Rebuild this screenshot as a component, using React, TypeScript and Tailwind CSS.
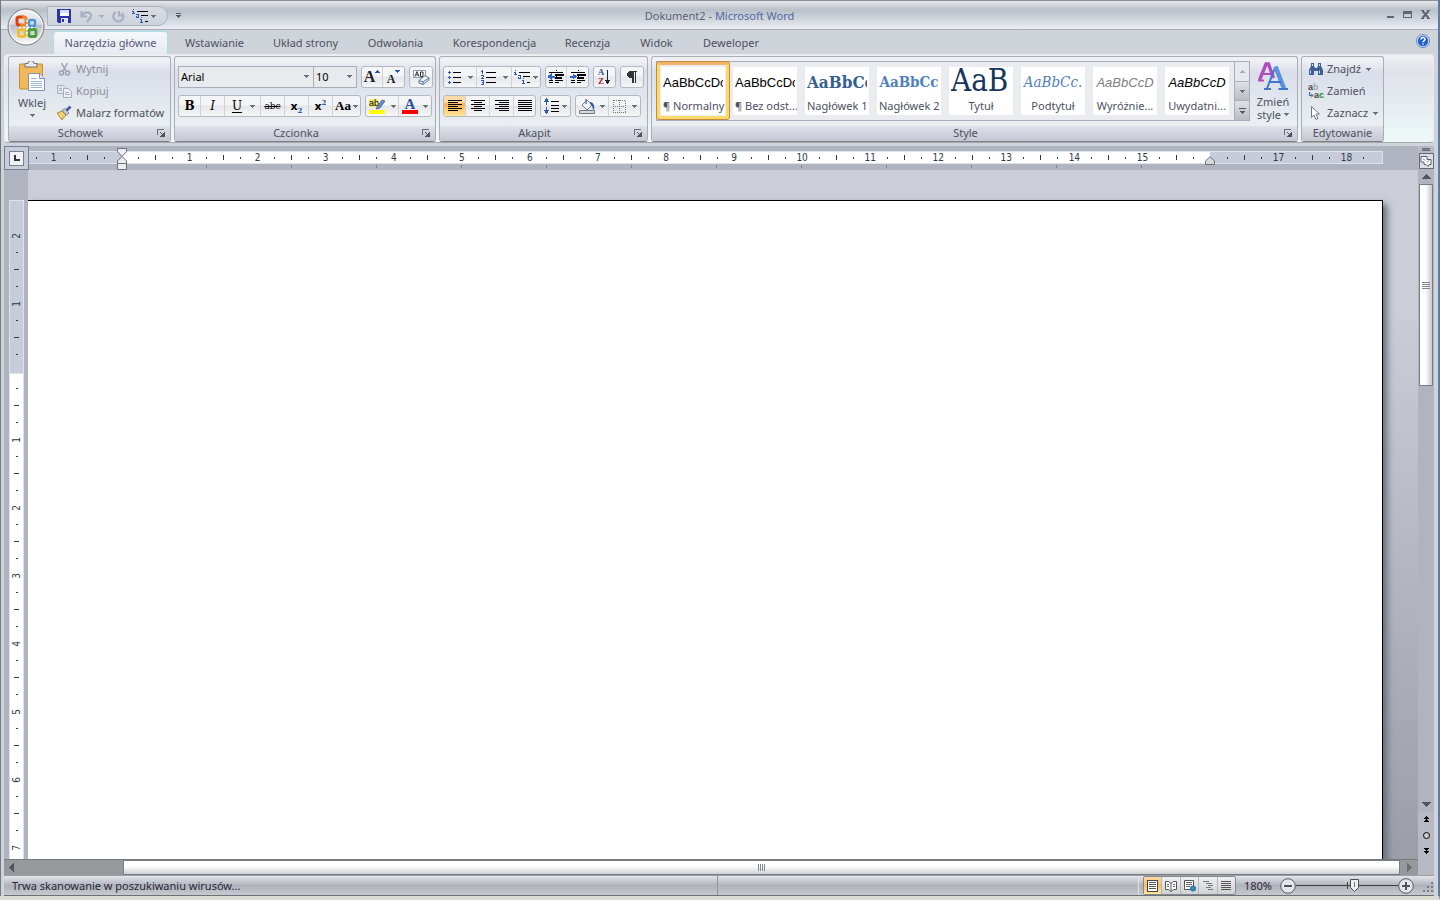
import { clsx } from 'clsx';
import type { ReactNode } from 'react';

const tabs = [
    { label: 'Wstawianie', width: 'w-[89px]' },
    { label: 'Układ strony', width: 'w-[93px]' },
    { label: 'Odwołania', width: 'w-[87px]' },
    { label: 'Korespondencja', width: 'w-[111px]' },
    { label: 'Recenzja', width: 'w-[75px]' },
    { label: 'Widok', width: 'w-[63px]' },
    { label: 'Deweloper', width: 'w-[86px]' },
];

const styles = [
    { name: '¶ Normalny', sample: 'AaBbCcDc', look: "font-['Liberation_Sans'] text-[13px] text-black", active: true },
    { name: '¶ Bez odst...', sample: 'AaBbCcDc', look: "font-['Liberation_Sans'] text-[13px] text-black" },
    { name: 'Nagłówek 1', sample: 'AaBbCc', look: "font-['DejaVu_Serif_Condensed','DejaVu_Serif'] text-[17px] font-bold text-[#365f91]" },
    { name: 'Nagłówek 2', sample: 'AaBbCc', look: "justify-center font-['DejaVu_Serif_Condensed','DejaVu_Serif'] text-[15px] font-bold text-[#4f81bd]" },
    { name: 'Tytuł', sample: 'AaB', look: "pb-[5px] font-['DejaVu_Serif_Condensed','DejaVu_Serif'] text-[31px] text-[#17365d]" },
    { name: 'Podtytuł', sample: 'AaBbCc.', look: "justify-center font-['DejaVu_Serif_Condensed','DejaVu_Serif'] text-[15px] italic text-[#4f81bd]" },
    { name: 'Wyróżnie...', sample: 'AaBbCcD', look: "justify-center font-['Liberation_Sans'] text-[13px] italic text-[#808080]" },
    { name: 'Uwydatni...', sample: 'AaBbCcD', look: "justify-center font-['Liberation_Sans'] text-[13px] italic text-black" },
];

function Caret({ className }: { className?: string }) {
    return (
        <svg className={clsx('shrink-0', className)} width="5" height="3" viewBox="0 0 5 3" shapeRendering="crispEdges">
            <path d="M0 0h5v1h-1v1h-1v1h-1v-1h-1v-1h-1z" fill="#6b7078" />
        </svg>
    );
}

function Bars({ rows, color = '#000' }: { rows: number[][]; color?: string }) {
    return (
        <>
            {rows.map(([x, y, w], i) => (
                <rect key={i} x={x} y={y} width={w} height="1" fill={color} />
            ))}
        </>
    );
}

function Icon({ w = 16, h = 16, crisp, children }: { w?: number; h?: number; crisp?: boolean; children: ReactNode }) {
    return (
        <svg className="shrink-0" width={w} height={h} viewBox={`0 0 ${w} ${h}`} fill="none" shapeRendering={crisp ? 'crispEdges' : 'auto'}>
            {children}
        </svg>
    );
}

function ButtonGroup({ children }: { children: ReactNode }) {
    return (
        <div className="flex h-[22px] shrink-0 divide-x divide-[#d0d4d9] overflow-hidden rounded-[3px] border border-[#b4b9c0] bg-linear-to-b from-[#f4f5f7] from-45% via-[#e4e6ea] via-50% to-[#f5f6f7]">
            {children}
        </div>
    );
}

function Tool({ label, width, active, children }: { label: string; width: string; active?: boolean; children: ReactNode }) {
    return (
        <button
            type="button"
            aria-label={label}
            className={clsx(
                'flex h-full shrink-0 items-center justify-center text-black',
                width,
                active && 'bg-linear-to-b from-[#fbd9a8] from-30% via-[#fdb04e] via-40% to-[#fee9a0]',
            )}
        >
            {children}
        </button>
    );
}

function RibbonGroup({ title, width, launcher, children }: { title: string; width: string; launcher?: boolean; children: ReactNode }) {
    return (
        <section
            className={clsx(
                'flex h-[86px] shrink-0 flex-col overflow-hidden rounded-[3px] border border-[#abaeb5] border-b-[#7d8084] bg-linear-to-b from-[#eef0f4] from-5% via-[#dadeea] via-18% to-[#eff4f4]',
                width,
            )}
        >
            <div className="flex flex-1">{children}</div>
            <div className="flex h-[15px] items-center bg-linear-to-b from-[#dee1ea] to-[#c5c8d2] pb-px">
                <h2 className="flex-1 text-center">{title}</h2>
                {launcher && (
                    <button type="button" aria-label={`${title} – więcej opcji`} className="flex w-[18px] justify-center">
                        <Icon w={8} h={8} crisp>
                            <path d="M0 0h7v1H1v5H0z" fill="#6a6e76" />
                            <path d="M7 3h1v5H3V7h1V6h1V5h1V4h1zM3 3h1v1H3zM4 4h1v1H4z" fill="#50545c" />
                        </Icon>
                    </button>
                )}
            </div>
        </section>
    );
}

function OfficeButton() {
    return (
        <button type="button" aria-label="Przycisk pakietu Office" className="absolute top-[8px] left-[6px] z-10">
            <svg width="38" height="38" viewBox="0 0 38 38" fill="none">
                <defs>
                    <linearGradient id="orb" x1="0" y1="0" x2="0" y2="1">
                        <stop offset="0" stopColor="#f6f6f8" />
                        <stop offset="0.42" stopColor="#d9dade" />
                        <stop offset="0.46" stopColor="#babcc3" />
                        <stop offset="1" stopColor="#ffffff" />
                    </linearGradient>
                </defs>
                <circle cx="19" cy="19" r="18" fill="url(#orb)" stroke="#777b82" />
                <circle cx="19" cy="19" r="16.500" stroke="#fff" strokeOpacity="0.7" />
                <path d="M14 17h-2a2 2 0 0 1-2-2v-4a2 2 0 0 1 2-2h5" stroke="#dd3f0c" strokeWidth="3" />
                <path d="M15 9h2a2 2 0 0 1 2 2v4a2 2 0 0 1-2 2h-4" stroke="#f58220" strokeWidth="3" />
                <rect x="22" y="12" width="6" height="6" rx="1.500" stroke="#4a95d8" strokeWidth="2.400" />
                <rect x="11.500" y="21.500" width="6.500" height="7" rx="1.500" stroke="#f8b91c" strokeWidth="2.600" />
                <rect x="22" y="21.500" width="7" height="7" rx="1.500" stroke="#4c9e3a" strokeWidth="2.800" />
                <path d="M20 12v16M12 19.500h16" stroke="#fff" strokeWidth="1.500" strokeDasharray="2 2" />
            </svg>
        </button>
    );
}

function TitleBar() {
    return (
        <header className="grid h-[30px] shrink-0 grid-cols-[1fr_auto_1fr] items-center border-t border-b border-t-[#8b8f97] border-b-[#a5abb5] bg-linear-to-b from-[#e6e7ea] from-0% via-[#b9c0c9] via-32% to-[#eaedf3] pt-[2px]">
            <div className="flex items-center pl-[46px]">
                <div className="flex h-[20px] w-[121px] items-center rounded-r-full border border-[#aeb5bf] bg-linear-to-b from-[#d9dce2] to-[#cdd3dc] pl-[9px]">
                    <button type="button" aria-label="Zapisz">
                        <Icon w={15} h={15} crisp>
                            <path d="M0 0h14v14H1L0 13z" fill="#2b35a8" />
                            <path d="M3 1h9v6H3z" fill="#cfe0fa" />
                            <path d="M3 4h9v3H3z" fill="#fff" />
                            <path d="M4 9h7v5H4z" fill="#dfe3f6" />
                            <path d="M5 10h2v3H5z" fill="#2b35a8" />
                        </Icon>
                    </button>
                    <button type="button" aria-label="Cofnij" className="ml-[8px] flex items-center">
                        <Icon w={13} h={13}>
                            <path d="M1.500 1v5.500H7M2 6C4 1.500 11 1 11 5.500c0 3-2.500 4-4 6.500" stroke="#a9aec2" strokeWidth="2.200" />
                        </Icon>
                        <Caret className="ml-[6px] opacity-40" />
                    </button>
                    <button type="button" aria-label="Powtórz" className="ml-[8px]">
                        <Icon w={13} h={13}>
                            <path d="M7 1v4.500h4.500M4 2a5 5 0 1 0 6 1" stroke="#a9aec2" strokeWidth="2.200" />
                        </Icon>
                    </button>
                    <button type="button" aria-label="Lista wielopoziomowa" className="ml-[7px] flex items-center">
                        <MultiListIcon />
                        <Caret className="ml-[2px]" />
                    </button>
                </div>
                <button type="button" aria-label="Dostosuj pasek Szybki dostęp" className="ml-[8px]">
                    <Icon w={5} h={6} crisp>
                        <path d="M0 0h5v1H0zM0 2h5v1H4v1H3v1H2V4H1V3H0z" fill="#555a63" />
                    </Icon>
                </button>
            </div>
            <h1 className="whitespace-pre text-[#5c5f72]">
                Dokument2 - <span className="text-[#54699f]">Microsoft Word</span>
            </h1>
            <div className="flex justify-end gap-[9px] pr-[8px] pb-[4px]">
                <button type="button" aria-label="Minimalizuj">
                    <Icon w={8} h={9} crisp>
                        <path d="M1 6h7v2H1z" fill="#5f6670" />
                    </Icon>
                </button>
                <button type="button" aria-label="Przywróć">
                    <Icon w={9} h={9} crisp>
                        <path d="M0 1h9v7H0zM1 4v3h7V4z" fill="#5f6670" fillRule="evenodd" />
                    </Icon>
                </button>
                <button type="button" aria-label="Zamknij">
                    <Icon w={9} h={9}>
                        <path d="M1.500 1l6 7M7.500 1l-6 7" stroke="#5f6670" strokeWidth="2" />
                        <path d="M0 .5h3M6 .5h3M0 8.500h3M6 8.500h3" stroke="#5f6670" />
                    </Icon>
                </button>
            </div>
        </header>
    );
}

function MultiListIcon() {
    return (
        <Icon w={17} h={16} crisp>
            <path d="M1 1h1v1H1zM0 3h2v2h1v1H0V5h1V4H0z" fill="#2c56b0" />
            <path d="M4 6h3v4H4V8h2V7H4zM5 8v1h1V8z" fill="#2c56b0" fillRule="evenodd" />
            <path d="M9 9h1v1H9zM8 11h2v3h1v1H8v-1h1v-2H8z" fill="#2c56b0" />
            <Bars rows={[[5, 3, 11], [9, 7, 7], [13, 13, 3]]} />
        </Icon>
    );
}

function TabBar() {
    return (
        <nav className="flex h-6 shrink-0 items-end pl-[49px]">
            <button
                type="button"
                className="h-[23px] w-[115px] rounded-t-[4px] border border-b-0 border-[#a9dfe8] bg-linear-to-b from-[#f4f7fa] to-[#e6eaf1] pb-px text-[#565a78]"
            >
                Narzędzia główne
            </button>
            <div className="flex flex-1 pl-[2px]">
                {tabs.map((tab) => (
                    <button key={tab.label} type="button" className={clsx('h-[23px] shrink-0 pt-px', tab.width)}>
                        {tab.label}
                    </button>
                ))}
            </div>
            <button type="button" aria-label="Pomoc" className="mr-1 mb-[6px]">
                <svg width="14" height="14" viewBox="0 0 14 14">
                    <circle cx="7" cy="7" r="6.500" fill="#e4edfa" stroke="#5b86c8" />
                    <circle cx="7" cy="7" r="5.200" fill="#2160c8" />
                    <path d="M5 5.500C5 3 9 3 9 5.300 9 6.800 7 6.800 7 8.300M7 9.500v1.300" stroke="#fff" strokeWidth="1.500" fill="none" />
                </svg>
            </button>
        </nav>
    );
}

function ClipboardGroup() {
    return (
        <RibbonGroup title="Schowek" width="w-[163px]" launcher>
            <button type="button" className="flex w-[46px] flex-col items-center pt-1">
                <Icon w={28} h={31}>
                    <rect x="1.500" y="3" width="23" height="25" rx="1" fill="#f1b95a" stroke="#c98e35" />
                    <path d="M7 2.500h3a3 3 0 0 1 6 0h3V6H7z" fill="#e8ebf0" stroke="#6c737c" />
                    <path d="M10.500 12.500h11l5 5v12h-16z" fill="#fff" stroke="#7f93b5" />
                    <path d="M21.500 12.500v5h5" fill="#dce6f5" stroke="#7f93b5" />
                    <path d="M13 17.500h6M13 20.500h11M13 22.500h11M13 24.500h11M13 26.500h11" stroke="#9fb2d0" />
                </Icon>
                <span className="mt-[4px] leading-[14px]">Wklej</span>
                <Caret className="mt-[4px]" />
            </button>
            <div className="flex flex-col pt-px pl-[2px]">
                <button type="button" disabled className="flex h-[22px] items-center gap-[4px] text-[#8c8f99]">
                    <Icon w={15} h={14}>
                        <path d="M4.500 1l4.500 8M10.500 1L6 9" stroke="#9ca1b4" strokeWidth="1.500" />
                        <circle cx="4.500" cy="11" r="2" stroke="#9ca1b4" strokeWidth="1.500" />
                        <circle cx="10.500" cy="11" r="2" stroke="#9ca1b4" strokeWidth="1.500" />
                    </Icon>
                    Wytnij
                </button>
                <button type="button" disabled className="flex h-[22px] items-center gap-[4px] text-[#8c8f99]">
                    <Icon w={15} h={14}>
                        <path d="M.5 1.500h6l2 2v6h-8z" fill="#e4e6ee" stroke="#a8adbf" />
                        <path d="M6.500 4.500h5l3 3v6h-8z" fill="#eef0f5" stroke="#a8adbf" />
                        <path d="M8 8.500h4M8 10.500h5M2 4.500h3M2 6.500h3" stroke="#a8adbf" />
                    </Icon>
                    Kopiuj
                </button>
                <button type="button" className="flex h-[22px] items-center gap-[4px]">
                    <Icon w={15} h={14}>
                        <path d="M0 7l5-2 4 4-4 5z" fill="#ecc45a" stroke="#97702a" strokeWidth="0.700" />
                        <path d="M2 8l3 3M4 6.500l3 3" stroke="#fff3b8" />
                        <path d="M5 4.500l2.500-2 4.500 4.500-2.500 2z" fill="#c9cdd8" stroke="#5b5f6c" strokeWidth="0.700" />
                        <path d="M9.500 4.500l4-4" stroke="#4a5ba8" strokeWidth="2.800" />
                    </Icon>
                    Malarz formatów
                </button>
            </div>
        </RibbonGroup>
    );
}

function FontGroup() {
    return (
        <RibbonGroup title="Czcionka" width="w-[262px]" launcher>
            <div className="flex flex-col gap-[7px] pt-[9px] pl-[3px]">
                <div className="flex gap-[4px]">
                    <div className="flex">
                        <label className="relative flex">
                            <select aria-label="Czcionka" className="h-[22px] w-[136px] appearance-none border border-[#a8afba] bg-[#e8eaed] pl-[2px] text-black">
                                <option>Arial</option>
                            </select>
                            <Caret className="pointer-events-none absolute top-[9px] right-[5px]" />
                        </label>
                        <label className="relative -ml-px flex">
                            <select aria-label="Rozmiar czcionki" className="h-[22px] w-[44px] appearance-none border border-[#a8afba] bg-[#e8eaed] pl-[2px] text-black">
                                <option>10</option>
                            </select>
                            <Caret className="pointer-events-none absolute top-[9px] right-[5px]" />
                        </label>
                    </div>
                    <ButtonGroup>
                        <Tool label="Zwiększ czcionkę" width="w-[21px]">
                            <span className="font-['Liberation_Serif'] text-[16px] font-bold text-[#222]">A</span>
                            <Icon w={5} h={14} crisp>
                                <path d="M2 0h1v1h1v1h1v1H0V2h1V1h1z" fill="#2c56b0" />
                            </Icon>
                        </Tool>
                        <Tool label="Zmniejsz czcionkę" width="w-[21px]">
                            <span className="pt-[3px] font-['Liberation_Serif'] text-[12px] font-bold text-[#222]">A</span>
                            <Icon w={5} h={14} crisp>
                                <path d="M0 0h5v1H4v1H3v1H2V2H1V1H0z" fill="#2c56b0" />
                            </Icon>
                        </Tool>
                    </ButtonGroup>
                    <ButtonGroup>
                        <Tool label="Wyczyść formatowanie" width="w-[22px]">
                            <Icon w={17} h={16}>
                                <path d="M.5 1.500h12v7H.5z" fill="#fff" stroke="#8b98b0" />
                                <path d="M2 7.500l2-5 2 5M3 6h2.500M7.500 3v4.500h2.500V3z" stroke="#333" />
                                <path d="M6 11.500l6-5 4 2.500v2l-6 4.500-4-1.500z" fill="#eef2fa" stroke="#5e739c" />
                                <path d="M6 11.500l4 1.500 6-4M10 13v2.500" stroke="#5e739c" />
                            </Icon>
                        </Tool>
                    </ButtonGroup>
                </div>
                <div className="flex gap-[4px] font-['DejaVu_Serif']">
                    <ButtonGroup>
                        <Tool label="Pogrubienie" width="w-[22px]">
                            <b className="text-[12px]">B</b>
                        </Tool>
                        <Tool label="Kursywa" width="w-[24px]">
                            <i className="text-[12px]">I</i>
                        </Tool>
                        <Tool label="Podkreślenie" width="w-[36px]">
                            <span className="pr-[8px] pl-[2px] text-[12px] underline underline-offset-2">U</span>
                            <Caret />
                        </Tool>
                        <Tool label="Przekreślenie" width="w-[24px]">
                            <s className="font-['DejaVu_Serif_Condensed','DejaVu_Serif'] text-[10px]">abc</s>
                        </Tool>
                        <Tool label="Indeks dolny" width="w-[24px]">
                            <b className="font-['DejaVu_Sans'] text-[11px] leading-none">x</b>
                            <b className="pt-[8px] text-[7px] leading-none text-[#2c56b0]">2</b>
                        </Tool>
                        <Tool label="Indeks górny" width="w-[24px]">
                            <b className="font-['DejaVu_Sans'] text-[11px] leading-none">x</b>
                            <b className="pb-[8px] text-[7px] leading-none text-[#2c56b0]">2</b>
                        </Tool>
                        <Tool label="Zmień wielkość liter" width="w-[27px]">
                            <b className="pr-[2px] font-['Liberation_Serif'] text-[13px]">Aa</b>
                            <Caret />
                        </Tool>
                    </ButtonGroup>
                    <ButtonGroup>
                        <Tool label="Kolor wyróżnienia tekstu" width="w-[33px]">
                            <Icon w={17} h={16}>
                                <path d="M0 1h9v8H0z" fill="#f7ef6a" />
                                <text x="0" y="8" fontSize="9" fontFamily="Liberation Sans" fill="#000">ab</text>
                                <path d="M8 9l5-7 3 1-5 7-4 1z" fill="#6f8bc5" stroke="#3f558c" strokeWidth="0.700" />
                                <path d="M0 12h16v4H0z" fill="#ff0" />
                            </Icon>
                            <Caret className="ml-[5px]" />
                        </Tool>
                        <Tool label="Kolor czcionki" width="w-[32px]">
                            <span className="flex w-4 flex-col items-center border-b-4 border-[#f00] font-['Liberation_Serif'] text-[15px] leading-[12px] font-bold text-[#2f5397]">A</span>
                            <Caret className="ml-[5px]" />
                        </Tool>
                    </ButtonGroup>
                </div>
            </div>
        </RibbonGroup>
    );
}

function ParagraphGroup() {
    return (
        <RibbonGroup title="Akapit" width="w-[209px]" launcher>
            <div className="flex flex-col gap-[7px] pt-[9px] pl-[3px]">
                <div className="flex gap-[4px]">
                    <ButtonGroup>
                        <Tool label="Punktory" width="w-[33px]">
                            <Icon w={14} h={14}>
                                <path d="M0 2.500h3M0 7.500h3M0 12.500h3M1.500 1v3M1.500 6v3M1.500 11v3" stroke="#2c56b0" />
                                <path d="M5 2.500h8M5 7.500h8M5 12.500h8" stroke="#000" />
                            </Icon>
                            <Caret className="ml-[6px]" />
                        </Tool>
                        <Tool label="Numerowanie" width="w-[35px]">
                            <Icon w={15} h={15} crisp>
                                <path d="M1 0h1v4H1zM0 1h1v1H0zM0 5h3v2H2v1h1v1H0V8h1V7h1V6H0zM0 10h3v5H0v-1h2v-1H1v-1h1v-1H0z" fill="#2c56b0" />
                                <Bars rows={[[5, 2, 10], [5, 7, 10], [5, 12, 10]]} />
                            </Icon>
                            <Caret className="ml-[7px]" />
                        </Tool>
                        <Tool label="Lista wielopoziomowa" width="w-[28px]">
                            <MultiListIcon />
                            <Caret className="ml-[2px]" />
                        </Tool>
                    </ButtonGroup>
                    <ButtonGroup>
                        <Tool label="Zmniejsz wcięcie" width="w-[21px]">
                            <IndentIcon />
                        </Tool>
                        <Tool label="Zwiększ wcięcie" width="w-[21px]">
                            <IndentIcon right />
                        </Tool>
                    </ButtonGroup>
                    <ButtonGroup>
                        <Tool label="Sortuj" width="w-[21px]">
                            <span className="flex flex-col font-['Liberation_Serif'] text-[9px] leading-[9px] font-bold">
                                <span className="text-[#2c56b0]">A</span>
                                <span className="text-[#a52a3a]">Z</span>
                            </span>
                            <Icon w={7} h={15} crisp>
                                <path d="M3 0h1v10h2v1H5v2H4v1H3v-1H2v-2H1v-1h2z" fill="#222" />
                            </Icon>
                        </Tool>
                    </ButtonGroup>
                    <ButtonGroup>
                        <Tool label="Pokaż wszystko" width="w-[22px]">
                            <Icon w={10} h={13} crisp>
                                <path d="M3 0h7v1H9v11H8V1H7v11H5V7H3L1 6 0 4V2l1-1z" fill="#333" />
                            </Icon>
                        </Tool>
                    </ButtonGroup>
                </div>
                <div className="flex gap-[4px]">
                    <ButtonGroup>
                        <Tool label="Wyrównaj do lewej" width="w-[22px]" active>
                            <AlignIcon rows={[[0, 0, 14], [0, 2, 10], [0, 4, 14], [0, 6, 10], [0, 8, 14], [0, 10, 10]]} />
                        </Tool>
                        <Tool label="Wyśrodkuj" width="w-[24px]">
                            <AlignIcon rows={[[0, 0, 14], [3, 2, 8], [0, 4, 14], [3, 6, 8], [0, 8, 14], [3, 10, 8]]} />
                        </Tool>
                        <Tool label="Wyrównaj do prawej" width="w-[24px]">
                            <AlignIcon rows={[[0, 0, 14], [4, 2, 10], [0, 4, 14], [4, 6, 10], [0, 8, 14], [4, 10, 10]]} />
                        </Tool>
                        <Tool label="Wyjustuj" width="w-[21px]">
                            <AlignIcon rows={[[0, 0, 14], [0, 2, 14], [0, 4, 14], [0, 6, 14], [0, 8, 14], [0, 10, 14]]} />
                        </Tool>
                    </ButtonGroup>
                    <ButtonGroup>
                        <Tool label="Interlinia" width="w-[29px]">
                            <Icon w={15} h={16} crisp>
                                <path d="M2 0h1l2 4H3v3H2V4H0zM2 16h1l2-4H3V9H2v3H0z" fill="#2c56b0" />
                                <Bars rows={[[7, 3, 8], [7, 7, 8], [7, 10, 8], [7, 13, 8]]} />
                            </Icon>
                            <Caret className="ml-[3px]" />
                        </Tool>
                    </ButtonGroup>
                    <ButtonGroup>
                        <Tool label="Cieniowanie" width="w-[33px]">
                            <Icon w={16} h={16}>
                                <path d="M3 7l5-5 5 5-5 5z" fill="#f2f4f8" stroke="#66789c" />
                                <path d="M7 1v5" stroke="#66789c" strokeWidth="1.500" />
                                <path d="M11 4c3 0 5 3 4 8-2-1-1-4-3-5z" fill="#2c56b0" />
                                <path d="M.5 12.500h15v3H.5z" fill="#d6d9de" stroke="#777" />
                            </Icon>
                            <Caret className="ml-[5px]" />
                        </Tool>
                        <Tool label="Obramowanie" width="w-[31px]">
                            <Icon w={13} h={13} crisp>
                                <path d="M.5.5h12v12M.5 0v12M6.500 0v12M0 6.500h12" stroke="#777" strokeDasharray="1 1" />
                                <path d="M0 12.500h13" stroke="#777" strokeDasharray="1 1" />
                            </Icon>
                            <Caret className="ml-[6px]" />
                        </Tool>
                    </ButtonGroup>
                </div>
            </div>
        </RibbonGroup>
    );
}

function AlignIcon({ rows }: { rows: number[][] }) {
    return (
        <Icon w={14} h={12} crisp>
            <Bars rows={rows} />
        </Icon>
    );
}

function IndentIcon({ right }: { right?: boolean }) {
    return (
        <Icon w={16} h={14} crisp>
            <Bars rows={[[1, 2, 14], [7, 4, 9], [7, 5, 9], [7, 7, 7], [7, 8, 7], [1, 10, 4], [7, 10, 8], [1, 12, 4], [7, 12, 4]]} />
            <path d="M8.500 0v14" stroke="#000" strokeDasharray="1 1" />
            <path d={right ? 'M6 6.500L3 4v2H0v1h3v2z' : 'M0 6.500L3 4v2h3v1H3v2z'} fill="#2c66c8" stroke="#2c66c8" />
        </Icon>
    );
}

function StylesGroup() {
    return (
        <RibbonGroup title="Style" width="w-[647px]" launcher>
            <div className="mt-[4px] ml-1 flex h-[60px] w-[594px] border border-[#a8afba] bg-[#ebecef]">
                {styles.map((style) => (
                    <button
                        key={style.name}
                        type="button"
                        className={clsx(
                            'flex h-[57px] w-[72px] shrink-0 items-center justify-center',
                            style.active && 'rounded-[2px] border-[3px] border-[#fbd96a] border-t-[#f3b26b] outline outline-[#c98a3c]',
                        )}
                    >
                        <span className="flex h-12 w-16 flex-col overflow-hidden bg-white px-[2px]">
                            <span className={clsx('flex h-8 items-center overflow-hidden leading-none whitespace-nowrap', style.look)}>{style.sample}</span>
                            <span className="text-center leading-[14px] whitespace-nowrap">{style.name}</span>
                        </span>
                    </button>
                ))}
                <div className="ml-auto flex w-[15px] flex-col divide-y divide-[#a8afba] border-l border-[#a8afba]">
                    <button type="button" aria-label="W górę" className="flex flex-1 items-center justify-center bg-[#e6e9ed]">
                        <Caret className="rotate-180 opacity-50" />
                    </button>
                    <button type="button" aria-label="W dół" className="flex flex-1 items-center justify-center bg-linear-to-b from-[#dfe1e5] to-[#b9bcc2]">
                        <Caret />
                    </button>
                    <button type="button" aria-label="Więcej" className="flex flex-1 items-center justify-center bg-linear-to-b from-[#dfe1e5] to-[#b9bcc2]">
                        <Icon w={7} h={6} crisp>
                            <path d="M0 0h7v1H0zM1 3h5v1H5v1H4v1H3V5H2V4H1z" fill="#555a63" />
                        </Icon>
                    </button>
                </div>
            </div>
            <button type="button" className="flex w-[46px] flex-col items-center pt-[5px]">
                <Icon w={30} h={30}>
                    <path d="M1.500 18L8 2h2.500l5 14" stroke="#b04cc0" strokeWidth="3.400" />
                    <path d="M5 12h8M0 18.500h6" stroke="#b04cc0" strokeWidth="2" />
                    <path d="M9 26.500L16.500 7" stroke="#3f76c8" strokeWidth="2" />
                    <path d="M17.500 4.500L26 26.500" stroke="#5a92e0" strokeWidth="4.500" />
                    <path d="M12 20h11M6 27h7M20.500 27H30" stroke="#3f76c8" strokeWidth="2" />
                </Icon>
                <span className="mt-[3px] leading-[13px]">Zmień</span>
                <span className="flex items-center gap-[3px] leading-[13px]">
                    style <Caret />
                </span>
            </button>
        </RibbonGroup>
    );
}

function EditingGroup() {
    return (
        <RibbonGroup title="Edytowanie" width="w-[83px]">
            <div className="flex flex-col pt-px pl-[6px]">
                <button type="button" className="flex h-[22px] items-center gap-[3px]">
                    <Icon w={16} h={14}>
                        <path d="M3 1h3v3l1 2h2l1-2V1h3v3l2 4v5h-5V9H6v4H1V8l2-4z" fill="#3d5f98" />
                        <path d="M2.500 8.500v3M11.500 8.500v3M4.500 2v2M11.500 2v2" stroke="#d3e0f5" />
                    </Icon>
                    Znajdź <Caret className="ml-[2px]" />
                </button>
                <button type="button" className="flex h-[22px] items-center gap-[3px]">
                    <Icon w={16} h={16}>
                        <text x="0" y="7" fontSize="9" fontWeight="bold" fontFamily="Liberation Sans" fill="#444">a</text>
                        <text x="5" y="7" fontSize="9" fontWeight="bold" fontFamily="Liberation Sans" fill="#a4a6aa">b</text>
                        <text x="6" y="15" fontSize="9" fontWeight="bold" fontFamily="Liberation Sans" fill="#444">a</text>
                        <text x="11" y="15" fontSize="9" fontWeight="bold" fontFamily="Liberation Sans" fill="#1f8a2c">c</text>
                        <path d="M1.500 9v3.500h3M3 10.500l2 2-2 2" stroke="#3d5f98" />
                    </Icon>
                    Zamień
                </button>
                <button type="button" className="flex h-[22px] items-center gap-[3px]">
                    <Icon w={16} h={16}>
                        <path d="M3.500 1.500v11l2.500-2.500 2 4.500 2-1-2-4.500h3.500z" fill="#fff" stroke="#6c7a90" />
                    </Icon>
                    Zaznacz <Caret className="ml-[2px]" />
                </button>
            </div>
        </RibbonGroup>
    );
}

function Tick({ offset, vertical }: { offset: number; vertical?: boolean }) {
    const quarter = Math.abs(offset) % 4;
    if (quarter === 0) {
        return <span className={clsx("font-['DejaVu_Sans_Condensed','DejaVu_Sans'] text-[10px]", vertical && '-rotate-90')}>{Math.abs(offset) / 4}</span>;
    }
    if (vertical) {
        return <span className={clsx('h-px bg-[#30384a]', quarter === 2 ? 'w-[5px]' : 'w-[2px]')} />;
    }
    return <span className={clsx('w-px bg-[#30384a]', quarter === 2 ? 'h-[5px]' : 'h-[2px]')} />;
}

function Ticks({ from, count, stretch, vertical }: { from: number; count: number; stretch?: boolean; vertical?: boolean }) {
    return Array.from({ length: count }, (_, i) => (
        <span
            key={i}
            className={clsx('flex items-center justify-center leading-none', stretch ? 'w-0 flex-1' : 'shrink-0', !stretch && (vertical ? 'h-[17px]' : 'w-[17px]'))}
        >
            <Tick offset={from + i} vertical={vertical} />
        </span>
    ));
}

function HorizontalRuler() {
    return (
        <div className="flex h-6 shrink-0 bg-[#b0b4c0]">
            <button type="button" aria-label="Tabulator" className="flex w-[25px] items-center justify-center border border-[#777d97] bg-[#c9cdd8]">
                <span className="flex size-[15px] items-center justify-center border border-[#777d97] bg-[#f1f2f5]">
                    <span className="size-[6px] border-b-2 border-l-2 border-[#333]" />
                </span>
            </button>
            <div className="flex min-w-0 flex-1 flex-col pt-[5px] pr-[35px]">
                <div className="flex h-[13px] border-y border-[#dfe2ea] bg-[#c6ccd9] text-[#30384a]">
                    <div className="flex w-[93px] justify-end pr-[9px]">
                        <Ticks from={-5} count={5} />
                    </div>
                    <div className="relative flex min-w-0 flex-1 bg-white px-2">
                        <Ticks from={1} count={63} stretch />
                        <svg className="absolute -top-[4px] -left-[5px]" width="10" height="23" viewBox="0 0 10 23">
                            <path d="M.5.500h9v3L5 8.500.500 3.500zM5 8.500l4.500 4.500v2.500H.5V13zM.5 15.500h9v6h-9z" fill="#eceef1" stroke="#6d7076" />
                        </svg>
                        <svg className="absolute top-[4px] -right-[5px]" width="10" height="9" viewBox="0 0 10 9">
                            <path d="M.5 8.500V5L5 .8 9.500 5v3.500z" fill="#d8dadd" stroke="#6d7076" />
                        </svg>
                    </div>
                    <div className="flex w-[173px] border-r border-[#dfe2ea] pl-[9px]">
                        <Ticks from={65} count={9} />
                    </div>
                </div>
                <div className="flex pt-px pl-[93px]">
                    {Array.from({ length: 12 }, (_, i) => (
                        <span key={i} className="flex h-[3px] w-[85px] shrink-0 justify-end">
                            <span className="w-px bg-[#7f8492]" />
                        </span>
                    ))}
                </div>
            </div>
        </div>
    );
}

function VerticalRuler() {
    return (
        <div className="flex w-6 shrink-0 flex-col overflow-hidden bg-[#b0b4c0] pt-[30px] pl-[5px]">
            <div className="flex min-h-0 w-[15px] flex-1 flex-col overflow-hidden border-x border-[#dfe2ea] text-[#30384a]">
                <div className="flex h-[174px] shrink-0 flex-col items-center border-y border-[#dfe2ea] bg-[#c6ccd9] pt-[26px]">
                    <Ticks from={-8} count={8} vertical />
                </div>
                <div className="flex flex-1 flex-col items-center bg-white pt-[6px]">
                    <Ticks from={1} count={28} vertical />
                </div>
            </div>
        </div>
    );
}

function Workspace() {
    return (
        <div className="flex min-h-0 flex-1">
            <VerticalRuler />
            <main className="flex min-w-0 flex-1 overflow-hidden bg-linear-to-b from-[#cbced7] from-20% to-[#9b9ea6] pt-[30px] pr-[35px]">
                <div role="textbox" aria-label="Dokument" className="flex-1 border-t border-r border-black bg-white shadow-[4px_4px_7px_#666a78]" />
            </main>
        </div>
    );
}

function VerticalScroll() {
    return (
        <div className="flex w-[16px] shrink-0 flex-col items-center bg-[#b7bac5]">
            <span className="mt-[2px] h-[3px] w-[8px] border-y border-[#666a73] bg-[#85888e]" />
            <button type="button" aria-label="Linijka" className="mt-[2px] flex h-[16px] w-[15px] items-center justify-center border border-[#666a73] bg-[#dcdfe6]">
                <Icon w={12} h={12}>
                    <path d="M1 1.500h6v3h4v5H9l-1 2-2-2-2 0V7H1z" fill="#fff" stroke="#5b6070" />
                    <path d="M3 3.500l2 2M7 7.500l2-2" stroke="#5b6070" />
                </Icon>
            </button>
            <button type="button" aria-label="Przewiń w górę" className="flex h-[15px] w-full items-center justify-center bg-[#b0b4c0]">
                <Icon w={9} h={5} crisp>
                    <path d="M4 0h1l4 5H0z" fill="#50545e" />
                </Icon>
            </button>
            <div className="flex w-full flex-1 flex-col bg-[#b0b4c0]">
                <div className="flex h-[202px] w-[14px] flex-col items-center justify-center gap-px self-center rounded-[1px] border border-[#777b84] bg-linear-to-r from-white from-45% to-[#c9cacd]">
                    <span className="h-px w-2 bg-[#85888e]" />
                    <span className="h-px w-2 bg-[#85888e]" />
                    <span className="h-px w-2 bg-[#85888e]" />
                    <span className="h-px w-2 bg-[#85888e]" />
                </div>
            </div>
            <button type="button" aria-label="Przewiń w dół" className="flex h-[16px] w-full items-center justify-center bg-[#b0b4c0]">
                <Icon w={9} h={5} crisp>
                    <path d="M0 0h9L5 5H4z" fill="#50545e" />
                </Icon>
            </button>
            <div className="flex h-[63px] flex-col items-center gap-[9px] pt-[4px]">
                <button type="button" aria-label="Poprzednia strona">
                    <Icon w={5} h={7} crisp>
                        <path d="M2 0h1v1h1v1h1v1H3v1h1v1h1v1H0V5h1V4h1V3H0V2h1V1h1z" fill="#000" />
                    </Icon>
                </button>
                <button type="button" aria-label="Wybierz obiekt" className="size-[7px] rounded-full border border-black bg-[#c9cbd0]" />
                <button type="button" aria-label="Następna strona">
                    <Icon w={5} h={7} crisp>
                        <path d="M0 0h5v1H4v1H3v1h2v1H4v1H3v1H2V5H1V4H0V3h2V2H1V1H0z" fill="#000" />
                    </Icon>
                </button>
            </div>
        </div>
    );
}

function HorizontalScroll() {
    return (
        <div className="flex h-[16px] shrink-0 border-t border-[#77797d] bg-[#96999c]">
            <button type="button" aria-label="Przewiń w lewo" className="flex w-[119px] items-center pl-[5px]">
                <Icon w={5} h={9} crisp>
                    <path d="M5 0v9L0 5V4z" fill="#50545e" />
                </Icon>
            </button>
            <div className="flex flex-1 items-center justify-center gap-px rounded-[1px] border border-[#777b84] bg-linear-to-b from-white from-40% to-[#cfd0d3]">
                <span className="h-[7px] w-px bg-[#85888e]" />
                <span className="h-[7px] w-px bg-[#85888e]" />
                <span className="h-[7px] w-px bg-[#85888e]" />
                <span className="h-[7px] w-px bg-[#85888e]" />
            </div>
            <button type="button" aria-label="Przewiń w prawo" className="flex w-[18px] items-center justify-center">
                <Icon w={5} h={9} crisp>
                    <path d="M0 0v9l5-4V4z" fill="#6a6e76" />
                </Icon>
            </button>
        </div>
    );
}

function ZoomButton({ label, plus }: { label: string; plus?: boolean }) {
    return (
        <button type="button" aria-label={label}>
            <Icon w={16} h={16}>
                <circle cx="8" cy="8" r="7.300" fill="#e3e5e8" stroke="#55595f" />
                <path d={plus ? 'M4 8h8M8 4v8' : 'M4 8h8'} stroke="#50545a" strokeWidth="2" />
            </Icon>
        </button>
    );
}

function StatusBar() {
    return (
        <footer className="flex h-[21px] shrink-0 items-center border-t border-b border-t-[#9a9da4] border-b-[#6c7078] bg-linear-to-b from-[#e4e5e9] from-0% via-[#aeb3bb] via-50% to-[#c7c9ce] text-[#2c2438]">
            <div className="flex w-[714px] items-center self-stretch border-r border-[#8f939b] pl-[8px]">Trwa skanowanie w poszukiwaniu wirusów...</div>
            <div className="flex-1 self-stretch border-r border-[#e2e4e8]" />
            <div className="ml-1 flex h-[19px] w-[93px] divide-x divide-[#b4b7bd] rounded-[2px] border border-[#85898f] bg-linear-to-b from-[#eeeff1] to-[#cfd1d5]">
                <button type="button" aria-label="Układ wydruku" className="flex flex-1 items-center justify-center bg-linear-to-b from-[#fbd9a8] via-[#fdb95e] to-[#fee9a0]">
                    <Icon w={11} h={12} crisp>
                        <path d="M.5.500h10v11H.5z" fill="#fff" stroke="#444" />
                        <Bars rows={[[2, 2, 7], [2, 4, 7], [2, 6, 7], [2, 8, 7]]} color="#555" />
                    </Icon>
                </button>
                <button type="button" aria-label="Odczyt pełnoekranowy" className="flex flex-1 items-center justify-center">
                    <Icon w={12} h={12}>
                        <path d="M.5 1.500h3l2.500 2 2.500-2h3v8h-3l-2.500 2-2.500-2h-3zM6 3.500v8" fill="#fff" stroke="#555" />
                        <path d="M2 4.500h2M2 6.500h2M8 4.500h2M8 6.500h2" stroke="#666" />
                    </Icon>
                </button>
                <button type="button" aria-label="Układ sieci Web" className="flex flex-1 items-center justify-center">
                    <Icon w={12} h={12}>
                        <path d="M.5.500h9v9h-9z" fill="#fff" stroke="#555" />
                        <path d="M2 2.500h6M2 4.500h6M2 6.500h4" stroke="#666" />
                        <circle cx="9" cy="8.500" r="3" fill="#2f78b8" />
                        <path d="M8 7l2 1-1 2z" fill="#4fae4a" />
                    </Icon>
                </button>
                <button type="button" aria-label="Konspekt" className="flex flex-1 items-center justify-center">
                    <Icon w={10} h={10} crisp>
                        <Bars rows={[[0, 0, 6], [3, 2, 6], [5, 4, 5], [3, 6, 5], [5, 8, 5]]} color="#777" />
                    </Icon>
                </button>
                <button type="button" aria-label="Wersja robocza" className="flex flex-1 items-center justify-center">
                    <Icon w={10} h={10} crisp>
                        <Bars rows={[[0, 0, 10], [0, 2, 10], [0, 4, 10], [0, 6, 10], [0, 8, 10]]} color="#555" />
                    </Icon>
                </button>
            </div>
            <button type="button" className="w-[44px] text-center">
                180%
            </button>
            <ZoomButton label="Pomniejsz" />
            <label className="relative flex h-4 w-[102px] items-center">
                <svg width="102" height="16" viewBox="0 0 102 16" fill="none">
                    <path d="M0 7.500h102M51.500 4v7" stroke="#3a3d42" />
                    <path d="M54.500 1.500h8v8l-4 4-4-4z" fill="#eceef0" stroke="#4a4d52" />
                    <path d="M58.500 4v5" stroke="#777" />
                </svg>
                <input type="range" aria-label="Powiększenie" min="10" max="500" defaultValue="180" className="absolute inset-0 w-full opacity-0" />
            </label>
            <ZoomButton label="Powiększ" plus />
            <span className="flex w-[20px] justify-end self-end pb-[2px]">
                <Icon w={11} h={11} crisp>
                    <path d="M8 0h2v2H8zM8 4h2v2H8zM8 8h2v2H8zM4 4h2v2H4zM4 8h2v2H4zM0 8h2v2H0z" fill="#777b83" />
                </Icon>
            </span>
        </footer>
    );
}

export default function App() {
    return (
        <div className="flex h-screen flex-col overflow-hidden border-r border-b-[4px] border-r-[#4a7bd0] border-b-[#dcdcd2] bg-[#cfd3da] font-['Noto_Sans',sans-serif] text-[11px] leading-[16px] text-[#4d515e]">
            <div className="relative flex min-h-0 flex-1 flex-col border-x border-[#74787f]">
                <OfficeButton />
                <TitleBar />
                <div className="flex min-h-0 flex-1 flex-col bg-[#cfd3da] pr-1 pl-[3px]">
                    <TabBar />
                    <div className="flex h-[89px] shrink-0 gap-[3px] rounded-[4px] border border-[#e9ebef] border-b-[#a5a8ad] bg-linear-to-b from-[#f0f1f4] via-[#dfe2ea] via-20% to-[#eef9f8] pt-px pl-[3px]">
                        <ClipboardGroup />
                        <FontGroup />
                        <ParagraphGroup />
                        <StylesGroup />
                        <EditingGroup />
                    </div>
                    <div className="mt-[3px] flex min-h-0 flex-1">
                        <div className="flex min-w-0 flex-1 flex-col">
                            <HorizontalRuler />
                            <Workspace />
                            <HorizontalScroll />
                        </div>
                        <VerticalScroll />
                    </div>
                    <StatusBar />
                </div>
            </div>
        </div>
    );
}
